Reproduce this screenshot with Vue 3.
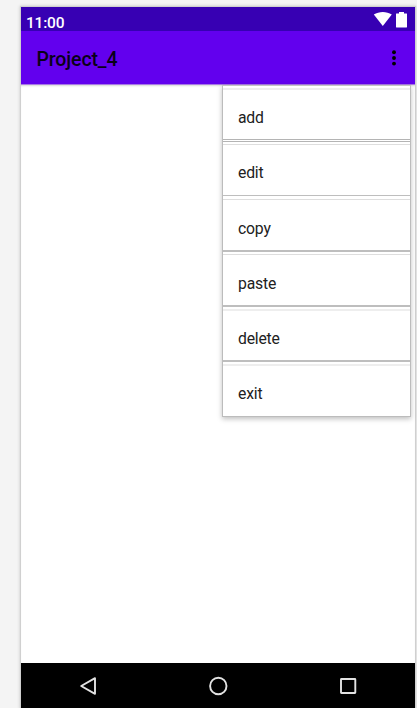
<script setup>
const items = [
  { label: 'add', kind: 'first' },
  { label: 'edit', kind: 'second' },
  { label: 'copy', kind: 'third' },
  { label: 'paste', kind: 'fourth' },
  { label: 'delete', kind: 'fifth' },
  { label: 'exit', kind: 'last' },
]
</script>

<template>
  <div class="stage">
    <div class="phone">
      <header class="status">
        <span class="clock">11:00</span>
        <svg class="wifi" width="20" height="16" viewBox="0 0 20 16">
          <path d="M.8 3.600C6 .1 13.600 .1 18.800 3.600L9.800 15z" fill="#fff" />
        </svg>
        <svg class="battery" width="11" height="16" viewBox="0 0 11 16">
          <path d="M3 0h5v1.400h2.600q.4 0 .4.4V15q0 .4-.4.4H.4q-.4 0-.4-.4V1.800q0-.4.4-.4H3z" fill="#fff" />
        </svg>
      </header>
      <div class="appbar">
        <h1>Project_4</h1>
        <svg class="dots" width="4" height="16" viewBox="0 0 4 16">
          <circle cx="2" cy="2.200" r="1.950" />
          <circle cx="2" cy="8" r="1.950" />
          <circle cx="2" cy="13.600" r="1.950" />
        </svg>
      </div>
      <main class="content">
        <ul class="menu">
          <li v-for="item in items" :key="item.label" class="item" :class="item.kind">
            <span class="cell"><span class="label">{{ item.label }}</span></span>
          </li>
        </ul>
      </main>
      <nav class="nav">
        <svg width="18" height="20" viewBox="0 0 18 20">
          <path d="M16 2.200v15.600L2.200 10z" />
        </svg>
        <svg width="20" height="20" viewBox="0 0 20 20">
          <circle cx="10.300" cy="10" r="8.200" />
        </svg>
        <svg width="18" height="20" viewBox="0 0 18 20">
          <rect x="2" y="3" width="14.300" height="14" rx=".4" />
        </svg>
      </nav>
    </div>
  </div>
</template>

<style>
body {
  margin: 0;
  overflow: hidden;
}
</style>

<style scoped>
.stage {
  box-sizing: border-box;
  width: 417px;
  height: 708px;
  padding: 7px 0 0 21px;
  overflow: hidden;
  background: #f4f4f4;
  font-family: Roboto, sans-serif;
}
.phone {
  display: flex;
  flex-direction: column;
  width: 394px;
  height: 701px;
  background: #fff;
  box-shadow: 0 0 0 1px #d0d0d0, 0 0 3px 1px #c4c4c4;
}
.status {
  display: flex;
  box-sizing: border-box;
  height: 24px;
  padding: 0 8px 0 5px;
  background: #3700b3;
}
.clock {
  flex: 1;
  padding-top: 6px;
  color: #fff;
  font-size: 15.500px;
  line-height: 21px;
  font-weight: 500;
  letter-spacing: -.2px;
}
.wifi {
  margin: 4px 3px 0 0;
}
.battery {
  margin-top: 5px;
}
.appbar {
  display: flex;
  align-items: center;
  justify-content: space-between;
  box-sizing: border-box;
  height: 53px;
  padding: 0 19px 0 15.400px;
  background: #6200ee;
  color: #0a0018;
}
h1 {
  margin: 4px 0 0;
  font-size: 19.500px;
  line-height: 24px;
  font-weight: 500;
  letter-spacing: -.1px;
}
.dots {
  margin-top: 1px;
  fill: #000;
}
.content {
  display: flex;
  justify-content: flex-end;
  align-items: flex-start;
  box-sizing: border-box;
  height: 579px;
  padding-right: 4px;
  border-top: 1px solid #a878e4;
  box-shadow: inset 0 2px 2px -1px #d8d8d8;
}
.menu {
  box-sizing: border-box;
  width: 189px;
  margin: 0;
  padding: 0;
  list-style: none;
  background: #fff;
  border: 1px solid #bcbcbc;
  border-top-color: #c4c4c4;
  box-shadow: 0 2px 5px #00000040;
}
.item {
  box-sizing: border-box;
  height: 55px;
  padding-top: 2px;
  border-bottom: 2px solid #bebebe;
}
.cell {
  display: block;
  box-sizing: border-box;
  height: 51px;
  padding: 19px 0 0 15px;
  border-top: 1px solid #dedede;
}
.label {
  display: block;
  color: #212121;
  font-size: 15.750px;
  line-height: 20px;
  letter-spacing: -.2px;
}
.first {
  border-bottom: 3px double #b4b4b4;
  height: 56px;
}
.second {
  height: 54px;
  border-bottom-width: 1px;
}
.second .cell {
  padding-top: 18px;
}
.third {
  height: 56px;
  padding-top: 3px;
}
.first .cell,
.fifth .cell,
.last .cell {
  padding-top: 18px;
  border-top: 2px solid #eee;
}
.last {
  height: 54px;
  border-bottom: 0;
}
.nav {
  display: grid;
  grid-template-columns: repeat(3, 130px);
  justify-content: center;
  align-items: center;
  justify-items: center;
  height: 45px;
  padding-top: 1px;
  box-sizing: border-box;
  background: #000;
}
.nav svg {
  fill: none;
  stroke: #e2e2e2;
  stroke-width: 1.900;
  stroke-linejoin: round;
}
</style>
